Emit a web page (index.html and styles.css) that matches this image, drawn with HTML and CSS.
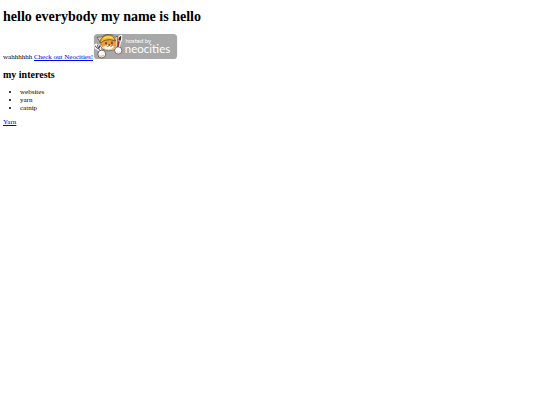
FILE: index.html
```html
<!DOCTYPE html>
<html lang="en">
<head>
    <meta charset="UTF-8">
    <meta name="viewport" content="width=device-width, initial-scale=1.0">
    <title>hello</title>
    <link rel="stylesheet" href="styles.css">
</head>
<body>
    <h1>hello everybody my name is hello</h1>

    <p class="intro">wahhhhhh <a href="https://neocities.org">Check out Neocities!<svg class="badge" viewBox="0 0 255 76" role="img" aria-label="Hosted by Neocities">
        <rect class="badge-back" x="1" y="0" width="253" height="76" rx="11" />
        <!-- fork -->
        <path d="M1 33 L9 29 L14 36 L17 29 L24 36 L22 44 L31 58 L23 64 L12 49 L4 45 Z" fill="#fff" />
        <path d="M5 35 L9 42 L15 44 L26 60 M12 34 L15 43 M19 35 L17 44" fill="none" stroke="#39414b" stroke-width="3" />
        <!-- brush -->
        <path d="M73 10 Q78 2 87 2 L87 20 L83 26 L77 54 L67 52 L72 24 Z" fill="#fff" />
        <path d="M75 20 Q75 8 84 5 Q85 15 81 22 Z" fill="#542821" />
        <path d="M77 22 L72 48" stroke="#a52c30" stroke-width="6" />
        <path d="M76 20 L82 22" stroke="#d4ae8d" stroke-width="3" />
        <!-- cat -->
        <path d="M20 24 L11 10 L26 9 Q35 0 49 1 Q60 1 64 10 L74 8 L72 25 Q76 41 61 48 Q46 55 29 47 Q16 38 20 24 Z" fill="#fff" stroke="#3d3023" stroke-width="2" />
        <path d="M22 23 L16 12 L30 15 L62 15 L70 11 L69 27 Q73 38 60 45 Q45 51 30 44 Q19 36 22 23 Z" fill="#f09a39" />
        <path d="M27 40 Q35 35 43 32 L49 32 Q54 37 64 38 Q57 47 44 47 Q33 46 27 40 Z" fill="#fff8e9" />
        <path d="M20 24 Q25 5 43 3 Q60 2 64 16 L67 21 Q48 14 35 19 Q27 22 22 28 Z" fill="#eebc32" stroke="#4b371d" stroke-width="2" />
        <path d="M31 12 Q43 5 58 12" fill="none" stroke="#ffe071" stroke-width="3" />
        <ellipse cx="38" cy="28" rx="2" ry="4" fill="#30241c" />
        <ellipse cx="56" cy="27" rx="2" ry="4" fill="#30241c" />
        <path d="M45 32 L50 32 L48 35 Z M39 36 Q43 40 48 35 Q53 40 57 35" fill="none" stroke="#513122" stroke-width="2" />
        <!-- paws -->
        <circle cx="25" cy="61" r="12" fill="#fff" stroke="#292723" stroke-width="2" />
        <path d="M19 65 Q24 70 32 65" fill="none" stroke="#edbd82" stroke-width="4" />
        <circle cx="75" cy="50" r="11" fill="#fff" stroke="#4b3b30" stroke-width="2" />
        <path d="M70 54 Q76 58 81 52" fill="none" stroke="#eed1ae" stroke-width="3" />
        <text class="badge-small" x="97" y="27">hosted by</text>
        <text class="badge-name" x="95" y="59">neocities</text>
    </svg></a></p>

    <h2>my interests</h2>
    <ul>
        <li>websites</li>
        <li>yarn</li>
        <li>catnip</li>
    </ul>

    <p><a href="#yarn">Yarn</a></p>
</body>
</html>
```
FILE: styles.css
```css
body {
    margin: 9px 3px;
    font-family: "Liberation Serif", "Times New Roman", serif;
    font-size: 7px;
    line-height: 8px;
    color: #000;
    background-color: #fff;
}

h1 {
    margin: 0 0 9px;
    font-size: 14px;
    line-height: 16px;
}

h2 {
    margin: 8px 0 7px;
    font-size: 10px;
    line-height: 12px;
}

p {
    margin: 6px 0;
}

ul {
    margin: 6px 0;
    padding-left: 17px;
}

a {
    color: #0000ee;
}

.badge {
    width: 85px;
    height: 25px;
    vertical-align: baseline;
}

.badge-back {
    fill: #a8a8a8;
}

.badge text {
    font-family: Lato, "Open Sans", sans-serif;
    fill: #fff;
}

.badge-small {
    font-size: 18px;
}

.badge-name {
    font-size: 35px;
}
```
